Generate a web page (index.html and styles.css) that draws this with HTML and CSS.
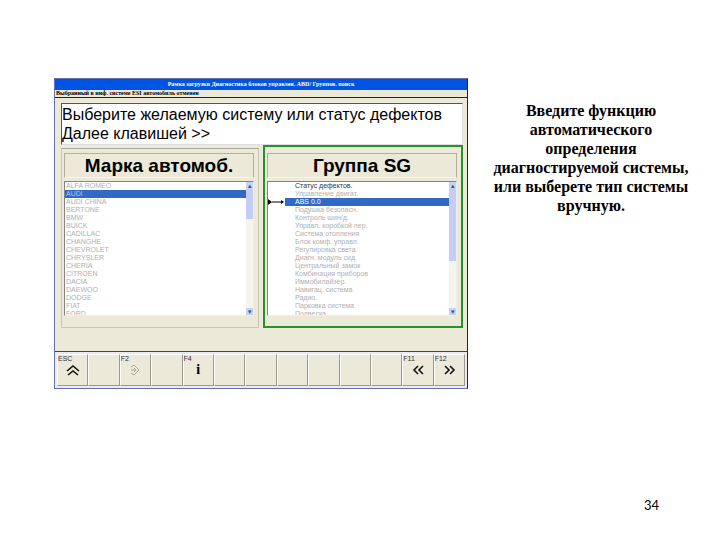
FILE: index.html
```
<!DOCTYPE html>
<html lang="ru">
<head>
<meta charset="utf-8">
<title>Диагностика</title>
<link rel="stylesheet" href="styles.css">
</head>
<body>
<main class="slide">
  <section class="window">
    <header class="titlebar">Рамка загрузки Диагностика блоков управлен. ABD/ Группов. поиск</header>
    <p class="status">Выбранный в инф. системе ESI автомобиль отменен</p>
    <div class="content">
      <p class="message">Выберите желаемую систему или статус дефектов<br>Далее клавишей &gt;&gt;</p>
      <div class="panels">
        <div class="panel">
          <label class="heading" for="brand">Марка автомоб.</label>
          <div class="list">
            <select id="brand" size="17">
              <option>ALFA ROMEO</option>
              <option class="current">AUDI</option>
              <option>AUDI CHINA</option>
              <option>BERTONE</option>
              <option>BMW</option>
              <option>BUICK</option>
              <option>CADILLAC</option>
              <option>CHANGHE</option>
              <option>CHEVROLET</option>
              <option>CHRYSLER</option>
              <option>CHERIA</option>
              <option>CITROEN</option>
              <option>DACIA</option>
              <option>DAEWOO</option>
              <option>DODGE</option>
              <option>FIAT</option>
              <option>FORD</option>
            </select>
            <div class="scroll"><span class="arrow">▴</span><span class="thumb"></span><span class="arrow end">▾</span></div>
          </div>
        </div>
        <div class="panel active">
          <label class="heading" for="group">Группа SG</label>
          <div class="list">
            <select id="group" class="indented" size="17">
              <option class="ready">Статус дефектов.</option>
              <option>Управление двигат.</option>
              <option class="current">ABS 0.0</option>
              <option>Подушка безопасн.</option>
              <option>Контроль шин/д.</option>
              <option>Управл. коробкой пер.</option>
              <option>Система отопления</option>
              <option>Блок комф. управл.</option>
              <option>Регулировка света</option>
              <option>Диагн. модуль сид.</option>
              <option>Центральный замок</option>
              <option>Комбинация приборов</option>
              <option>Иммобилайзер.</option>
              <option>Навигац. система</option>
              <option>Радио.</option>
              <option>Парковка система</option>
              <option>Подвеска</option>
            </select>
            <svg class="pointer" viewBox="0 0 17 8" aria-hidden="true"><path d="M0 1l4 3-4 3zM4 3.500h9V2l3 2-3 2V4.500H4z"/></svg>
            <div class="scroll"><span class="arrow">▴</span><span class="thumb long"></span><span class="arrow end">▾</span></div>
          </div>
        </div>
      </div>
    </div>
    <nav class="keys">
      <button type="button"><span class="key">ESC</span><svg viewBox="0 0 14 12"><path d="M1 7l6-5 6 5M2 11l5-4 5 4"/></svg></button>
      <button type="button" aria-label="Пусто"></button>
      <button type="button" class="off"><span class="key">F2</span><svg viewBox="0 0 14 12"><path d="M3 3l3-2 5 5-5 5-3-2M3 6h4M6 4l2 2-2 2"/></svg></button>
      <button type="button" aria-label="Пусто"></button>
      <button type="button"><span class="key">F4</span><b class="info">i</b></button>
      <button type="button" aria-label="Пусто"></button>
      <button type="button" aria-label="Пусто"></button>
      <button type="button" aria-label="Пусто"></button>
      <button type="button" aria-label="Пусто"></button>
      <button type="button" aria-label="Пусто"></button>
      <button type="button" aria-label="Пусто"></button>
      <button type="button"><span class="key">F11</span><svg viewBox="0 0 14 12"><path d="M7 2L3 6l4 4M12 2L8 6l4 4"/></svg></button>
      <button type="button"><span class="key">F12</span><svg viewBox="0 0 14 12"><path d="M3 2l4 4-4 4M8 2l4 4-4 4"/></svg></button>
    </nav>
  </section>
  <p class="caption">Введите функцию автоматического определения диагностируемой системы, или выберете тип системы вручную.</p>
</main>
<footer class="page-number">34</footer>
</body>
</html>
```
FILE: styles.css
```
* {
  box-sizing: border-box;
}

body {
  margin: 0;
  min-height: 100vh;
  display: flex;
  flex-direction: column;
  justify-content: space-between;
  background: #fff;
  color: #000;
  font-family: "Liberation Sans", Arial, sans-serif;
}

p {
  margin: 0;
}

.slide {
  display: flex;
  align-items: flex-start;
  gap: 20px;
  padding: 78px 26px 0 54px;
}

.window {
  flex: 2 1 0;
  background: #ece9d8;
  border: 1px solid #6672b0;
  border-right-color: #1c2450;
}

.titlebar {
  background: #0054e3;
  color: #fff;
  font: bold 6px/11px "Liberation Serif", serif;
  text-align: center;
}

.status {
  padding-left: 1px;
  border-bottom: 1px solid #222;
  font: bold 6px/7px "Liberation Serif", serif;
}

.content {
  padding: 5px 4px 23px 6px;
  border-bottom: 1px solid #24449c;
}

.message {
  height: 42px;
  padding: 1px 0;
  background: #fff;
  border: 1px solid #555;
  border-right-color: #ddd;
  border-bottom-color: #ddd;
  font-size: 16px;
  line-height: 19px;
  white-space: nowrap;
}

.panels {
  display: flex;
  gap: 4px;
}

.panel {
  flex: 1;
  min-width: 0;
  margin-top: 3px;
  padding: 4px 4px 11px 2px;
  border: 1px solid #c9c6b6;
  border-top-color: #aaa799;
}

.panel.active {
  margin-top: 0;
  padding: 6px 4px 9px 2px;
  border: 2px solid #26922b;
}

.heading {
  display: block;
  height: 25px;
  border: 1px solid #b5b09e;
  border-bottom-color: #f7f5e9;
  font-size: 19px;
  font-weight: bold;
  line-height: 23px;
  text-align: center;
}

.list {
  position: relative;
  display: flex;
  height: 135px;
  margin-top: 3px;
  background: #fff;
  border: 1px solid #85837a;
  border-right-color: #eee;
  border-bottom-color: #eee;
}

select {
  appearance: none;
  flex: 1;
  min-width: 0;
  height: 133px;
  margin: 0;
  padding: 0;
  border: 0;
  border-radius: 0;
  outline: 0;
  overflow: hidden;
  background: #fff;
  font: 7px "Liberation Sans", Arial, sans-serif;
}

option {
  min-height: 8px;
  height: 8px;
  padding: 0 1px;
  color: #b0b0b0;
  font-size: 7px;
  line-height: 8px;
}

.indented option {
  padding-left: 27px;
}

option.ready {
  color: #333;
}

option.current {
  background: #316ac5;
  color: #a9c4f0;
}

.indented option.current {
  background: linear-gradient(to right, #fff 17px, #316ac5 17px);
  color: #fff;
}

.pointer {
  position: absolute;
  top: 16px;
  left: 0;
  width: 17px;
  height: 8px;
}

.scroll {
  width: 7px;
  display: flex;
  flex-direction: column;
  background: #f6f4ee;
}

.arrow {
  height: 7px;
  background: #c3d3fa;
  color: #3c5080;
  font-size: 7px;
  line-height: 7px;
  text-align: center;
}

.thumb {
  height: 30px;
  background: #c3cdf8;
}

.thumb.long {
  height: 72px;
}

.end {
  margin-top: auto;
}

.keys {
  display: flex;
  padding: 2px;
  background: #eceaf0;
}

button {
  position: relative;
  flex: 1;
  min-width: 0;
  height: 32px;
  display: flex;
  align-items: center;
  justify-content: center;
  padding: 0;
  border: 1px solid;
  border-color: #fff #9d9a8c #9d9a8c #fff;
  background: #ece9d8;
  color: #000;
  font: 14px "Liberation Serif", serif;
}

.key {
  position: absolute;
  top: 0;
  left: 0;
  font: 7px/8px "Liberation Sans", Arial, sans-serif;
  color: #333;
}

button svg {
  width: 14px;
  height: 12px;
  fill: none;
  stroke: #111;
  stroke-width: 1.6;
}

.off svg {
  stroke: #aaa798;
  stroke-width: 1;
}

.caption {
  flex: 1 1 0;
  padding-top: 23px;
  font: bold 16px/19px "Liberation Serif", "Times New Roman", serif;
  text-align: center;
}

.page-number {
  padding: 0 61px 26px 0;
  font: 13px/18px Lato, sans-serif;
  text-align: right;
}
```
